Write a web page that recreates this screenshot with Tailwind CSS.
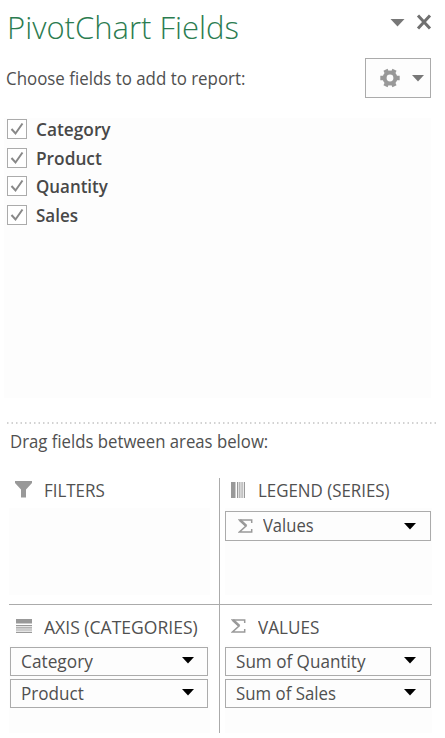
<!DOCTYPE html>
<html lang="en">
<head>
    <meta charset="UTF-8">
    <meta name="viewport" content="width=device-width, initial-scale=1.0">
    <title>PivotChart Fields</title>
    <script src="https://cdn.jsdelivr.net/npm/@tailwindcss/browser@4"></script>
</head>
<body class="bg-white">
    <div class="h-[738px] w-[445px] overflow-hidden bg-white font-['Open_Sans',sans-serif] text-[18px] leading-[22px] text-[#505050] whitespace-nowrap">
        <!-- title bar -->
        <header class="flex h-[57px] justify-between pl-[7px] pr-[13px]">
            <h1 class="origin-left pt-[7px] text-[31px] leading-10 font-light text-[#2b7c50]">PivotChart Fields</h1>
            <div class="flex gap-[11px] pt-[14px]">
                <svg class="mt-[5px] h-[8px] w-[15px]" viewBox="0 0 15 8" fill="#777"><path d="M0.5 0H14.5L7.5 7.5Z"/></svg>
                <svg class="h-4 w-4" viewBox="0 0 16 16" fill="none" stroke="#707070" stroke-width="3"><path d="M2 1.5L14 14.5M14 1.5L2 14.5"/></svg>
            </div>
        </header>
        <div class="flex h-[61px] justify-between pl-[6px] pr-[14px]">
            <p class="origin-left scale-x-[.938] pt-[10px]">Choose fields to add to report:</p>
            <button class="mt-[1px] flex h-10 w-[66px] items-center border border-[#ababab] bg-[#fdfdfd] pl-[14px]">
                <svg class="h-5 w-5 shrink-0" viewBox="0 0 20 20" fill="none" stroke="#999"><circle cx="10" cy="10" r="5.4" stroke-width="4"/><path stroke-width="4.6" d="M6.7 4.2L5.5 1.8M13.3 4.2L14.5 1.8M6.7 15.8L5.5 18.2M13.3 15.8L14.5 18.2M3 10H.3M17 10H19.7"/></svg>
                <svg class="ml-[12px] h-[7px] w-3 shrink-0" viewBox="0 0 12 7" fill="#777"><path d="M0 0H12L6 6.5Z"/></svg>
            </button>
        </div>
        <!-- field list -->
        <ul class="ml-1 h-[280px] w-[427px] bg-[#fdfdfd] pl-[3px] font-semibold text-[#484848]">
            <li class="flex h-[28.5px] gap-[9px]"><span class="mt-[1px] flex h-5 w-5 items-center justify-center border border-[#ababab] bg-white"><svg class="h-4 w-4" viewBox="0 0 16 16" fill="none" stroke="#888" stroke-width="2"><path d="M2.5 8L6.5 12.5L13.5 2.5"/></svg></span><span class="origin-left scale-x-[.96]">Category</span></li>
            <li class="flex h-[28.5px] gap-[9px]"><span class="mt-[1px] flex h-5 w-5 items-center justify-center border border-[#ababab] bg-white"><svg class="h-4 w-4" viewBox="0 0 16 16" fill="none" stroke="#888" stroke-width="2"><path d="M2.5 8L6.5 12.5L13.5 2.5"/></svg></span><span class="origin-left scale-x-[.96]">Product</span></li>
            <li class="flex h-[28.5px] gap-[9px]"><span class="mt-[1px] flex h-5 w-5 items-center justify-center border border-[#ababab] bg-white"><svg class="h-4 w-4" viewBox="0 0 16 16" fill="none" stroke="#888" stroke-width="2"><path d="M2.5 8L6.5 12.5L13.5 2.5"/></svg></span><span class="origin-left scale-x-[.94]">Quantity</span></li>
            <li class="flex h-[28.5px] gap-[9px]"><span class="mt-[1px] flex h-5 w-5 items-center justify-center border border-[#ababab] bg-white"><svg class="h-4 w-4" viewBox="0 0 16 16" fill="none" stroke="#888" stroke-width="2"><path d="M2.5 8L6.5 12.5L13.5 2.5"/></svg></span><span class="origin-left scale-x-[.945]">Sales</span></li>
        </ul>
        <!-- divider -->
        <svg class="mt-6 ml-[7px] h-[2px] w-[430px]" viewBox="0 0 430 2"><path d="M0 1H430" stroke="#c4c4c4" stroke-width="1.5" stroke-dasharray="1.5 3"/></svg>
        <div class="flex h-[54px] pt-[6px] pl-[10px]"><p class="origin-left scale-x-[.93]">Drag fields between areas below:</p></div>
        <!-- areas -->
        <div class="ml-[9px] grid h-[255px] w-[423px] grid-cols-[211px_212px] grid-rows-[127px_128px]">
            <section class="border-r border-b border-[#ababab]">
                <div class="flex h-[30px] pl-[6px]">
                    <svg class="mt-[3px] h-[17px] w-[17px]" viewBox="0 0 17 17" fill="#999"><path d="M0 0H17V2L11 8.5V16.5H6V8.5L0 2Z"/></svg>
                    <h2 class="mt-[1px] ml-3 origin-left scale-x-[.94]">FILTERS</h2>
                </div>
                <div class="h-[87px] w-[201px] bg-[#fdfdfd]"></div>
            </section>
            <section class="border-b border-[#ababab] pl-[5px]">
                <div class="flex h-[30px] pl-[6px]">
                    <svg class="mt-[4px] h-4 w-[14px]" viewBox="0 0 14 16" fill="#999"><path d="M0 0H4.5V16H0ZM6 0H7.3V16H6ZM8.3 0H9.4V16H8.3ZM10.5 0H11.6V16H10.5ZM12.8 0H14V16H12.8Z"/></svg>
                    <h2 class="mt-[1px] ml-[13px] origin-left scale-x-[.938]">LEGEND (SERIES)</h2>
                </div>
                <div class="h-[87px] bg-[#fdfdfd] pt-[3px]">
                    <div class="flex h-[30px] w-[206px] items-center border border-[#ababab] bg-[#fdfdfd] pr-[14px] pl-3">
                        <svg class="h-[14px] w-[15px]" viewBox="0 0 15 14" fill="none" stroke="#999" stroke-width="1.5"><path d="M13.7 4V1H1.5L8 7L1.5 13H13.7V10"/><path d="M2 1L8.4 7" stroke-width="2.4"/></svg>
                        <span class="mb-[2px] ml-[10px] origin-left scale-x-[.92]">Values</span>
                        <svg class="ml-auto h-[7px] w-3" viewBox="0 0 12 7" fill="#000"><path d="M0 0H12L6 6.5Z"/></svg>
                    </div>
                </div>
            </section>
            <section class="border-r border-[#ababab]">
                <div class="flex h-[40px] pt-[11px] pl-[7px]">
                    <svg class="mt-[3px] h-[14px] w-4 shrink-0" viewBox="0 0 16 14" fill="#999"><path d="M0 0H16V4.5H0ZM0 6H16V7.2H0ZM0 8.3H16V9.4H0ZM0 10.5H16V11.6H0ZM0 12.8H16V14H0Z"/></svg>
                    <h2 class="ml-3 origin-left scale-x-[.975]">AXIS (CATEGORIES)</h2>
                </div>
                <div class="flex h-[88px] w-[201px] flex-col gap-[3px] bg-[#fdfdfd] pt-[2px] pl-[1px]">
                    <div class="flex h-[29px] w-[198px] items-center border border-[#ababab] pr-[13px] pl-[10px]"><span class="mb-[2px] origin-left scale-x-[.96]">Category</span><svg class="mb-[3px] ml-auto h-[7px] w-3" viewBox="0 0 12 7" fill="#000"><path d="M0 0H12L6 6.5Z"/></svg></div>
                    <div class="flex h-[29px] w-[198px] items-center border border-[#ababab] pr-[13px] pl-[10px]"><span class="mb-[2px] origin-left scale-x-[.95]">Product</span><svg class="mb-[3px] ml-auto h-[7px] w-3" viewBox="0 0 12 7" fill="#000"><path d="M0 0H12L6 6.5Z"/></svg></div>
                </div>
            </section>
            <section class="pl-[5px]">
                <div class="flex h-[40px] pt-[11px] pl-[6px]">
                    <svg class="mt-[3px] h-[14px] w-[15px]" viewBox="0 0 15 14" fill="none" stroke="#999" stroke-width="1.5"><path d="M13.7 4V1H1.5L8 7L1.5 13H13.7V10"/><path d="M2 1L8.4 7" stroke-width="2.4"/></svg>
                    <h2 class="ml-3 origin-left scale-x-[.95]">VALUES</h2>
                </div>
                <div class="flex h-[88px] flex-col gap-[3px] bg-[#fdfdfd] pt-[2px]">
                    <div class="flex h-[29px] w-[206px] items-center border border-[#ababab] pr-[14px] pl-[10px]"><span class="mb-[2px] origin-left scale-x-[.95]">Sum of Quantity</span><svg class="mb-[3px] ml-auto h-[7px] w-3" viewBox="0 0 12 7" fill="#000"><path d="M0 0H12L6 6.5Z"/></svg></div>
                    <div class="flex h-[29px] w-[206px] items-center border border-[#ababab] pr-[14px] pl-[10px]"><span class="mb-[2px] origin-left scale-x-[.935]">Sum of Sales</span><svg class="mb-[3px] ml-auto h-[7px] w-3" viewBox="0 0 12 7" fill="#000"><path d="M0 0H12L6 6.5Z"/></svg></div>
                </div>
            </section>
        </div>
    </div>
</body>
</html>
